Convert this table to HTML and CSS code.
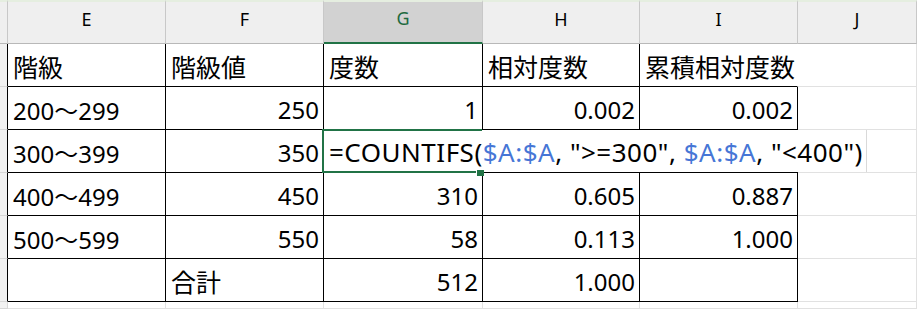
FILE: index.html
```html
<!DOCTYPE html>
<html lang="ja">
<head>
<meta charset="utf-8">
<title>度数分布表</title>
<link rel="stylesheet" href="styles.css">
</head>
<body>
<div class="sheet">
  <div class="grid">
    <div class="ch corner"></div>
    <div class="ch">E</div>
    <div class="ch">F</div>
    <div class="ch active">G</div>
    <div class="ch">H</div>
    <div class="ch">I</div>
    <div class="ch">J</div>

    <div class="rh"></div>
    <div class="c t jp">階級</div>
    <div class="c t jp">階級値</div>
    <div class="c t jp">度数</div>
    <div class="c t jp">相対度数</div>
    <div class="c t jp open">累積相対度数</div>
    <div class="c g"></div>

    <div class="rh"></div>
    <div class="c t">200～299</div>
    <div class="c t num">250</div>
    <div class="c t num">1</div>
    <div class="c t num">0.002</div>
    <div class="c t num">0.002</div>
    <div class="c g"></div>

    <div class="rh"></div>
    <div class="c t">300～399</div>
    <div class="c t num">350</div>
    <div class="c t num"></div>
    <div class="c t num"></div>
    <div class="c t num"></div>
    <div class="c g"></div>

    <div class="rh"></div>
    <div class="c t">400～499</div>
    <div class="c t num">450</div>
    <div class="c t num">310</div>
    <div class="c t num">0.605</div>
    <div class="c t num">0.887</div>
    <div class="c g"></div>

    <div class="rh"></div>
    <div class="c t">500～599</div>
    <div class="c t num">550</div>
    <div class="c t num">58</div>
    <div class="c t num">0.113</div>
    <div class="c t num">1.000</div>
    <div class="c g"></div>

    <div class="rh"></div>
    <div class="c t"></div>
    <div class="c t jp">合計</div>
    <div class="c t num">512</div>
    <div class="c t num">1.000</div>
    <div class="c t"></div>
    <div class="c g"></div>

    <div class="rh last"></div>
    <div class="c g"></div>
    <div class="c g"></div>
    <div class="c g"></div>
    <div class="c g"></div>
    <div class="c g"></div>
    <div class="c g"></div>
  </div>

  <div class="formula">=COUNTIFS(<span class="ref">$A:$A</span>, "&gt;=300", <span class="ref">$A:$A</span>, "&lt;400")</div>
  <div class="sel"></div>
  <div class="handle"></div>
</div>
</body>
</html>
```

FILE: styles.css
```css
html, body {
  margin: 0;
  padding: 0;
  background: #ffffff;
}

.sheet {
  position: relative;
  width: 917px;
  height: 309px;
  overflow: hidden;
  font-family: "Noto Sans", "Noto Sans CJK JP", sans-serif;
  color: #000;
}

.grid {
  display: grid;
  grid-template-columns: 8px 158px 158px 159px 157px 158px 1fr;
  grid-template-rows: 44px repeat(6, 43px) 1fr;
  height: 309px;
}

.grid > div {
  box-sizing: border-box;
  border-right: 1px solid #e1e1e1;
  border-bottom: 1px solid #e1e1e1;
  white-space: nowrap;
}

.ch {
  background: #efefef;
  border-top: 2px solid #e5eee0;
  border-right-color: #c8c8c8 !important;
  border-bottom-color: #b8b8b8 !important;
  display: flex;
  align-items: center;
  justify-content: center;
  padding-bottom: 8px;
  font-size: 18px;
}

.ch.corner {
  background: #efefef;
}

.ch.active {
  background: #d2d2d2;
  color: #1d6a3f;
  border-bottom: 2px solid #217346 !important;
}

.rh {
  background: #f1f1f1;
  border-right-color: #000 !important;
  border-bottom-color: #d6d6d6 !important;
}

.rh.last {
  border-right-color: #d6d6d6 !important;
}

.c {
  display: flex;
  align-items: center;
  padding: 2px 4px 0 5px;
  font-size: 24px;
  overflow: visible;
}

.c.t {
  border-right-color: #000;
  border-bottom-color: #000;
}

.c.t.open {
  border-right-color: transparent;
}

.c.num {
  justify-content: flex-end;
}

.c.jp {
  font-family: "Noto Sans CJK JP", sans-serif;
  font-size: 25px;
}

.c.g {
  border-right-color: #e1e1e1;
  border-bottom-color: #e1e1e1;
}

.formula {
  position: absolute;
  left: 324px;
  top: 130px;
  width: 543px;
  height: 42px;
  background: #ffffff;
  border-right: 1px solid #d9d9d9;
  display: flex;
  align-items: center;
  padding: 2px 0 0 5px;
  box-sizing: border-box;
  font-size: 26px;
  letter-spacing: 0.5px;
  white-space: pre;
}

.ref {
  color: #4676d6;
}

.sel {
  position: absolute;
  left: 322px;
  top: 129px;
  width: 160px;
  height: 44px;
  box-sizing: border-box;
  border: 2px solid #217346;
  border-right: none;
}

.handle {
  position: absolute;
  left: 476px;
  top: 169px;
  width: 8px;
  height: 7px;
  box-sizing: border-box;
  background: #217346;
  border-left: 1px solid #fff;
  border-top: 1px solid #fff;
}
```
